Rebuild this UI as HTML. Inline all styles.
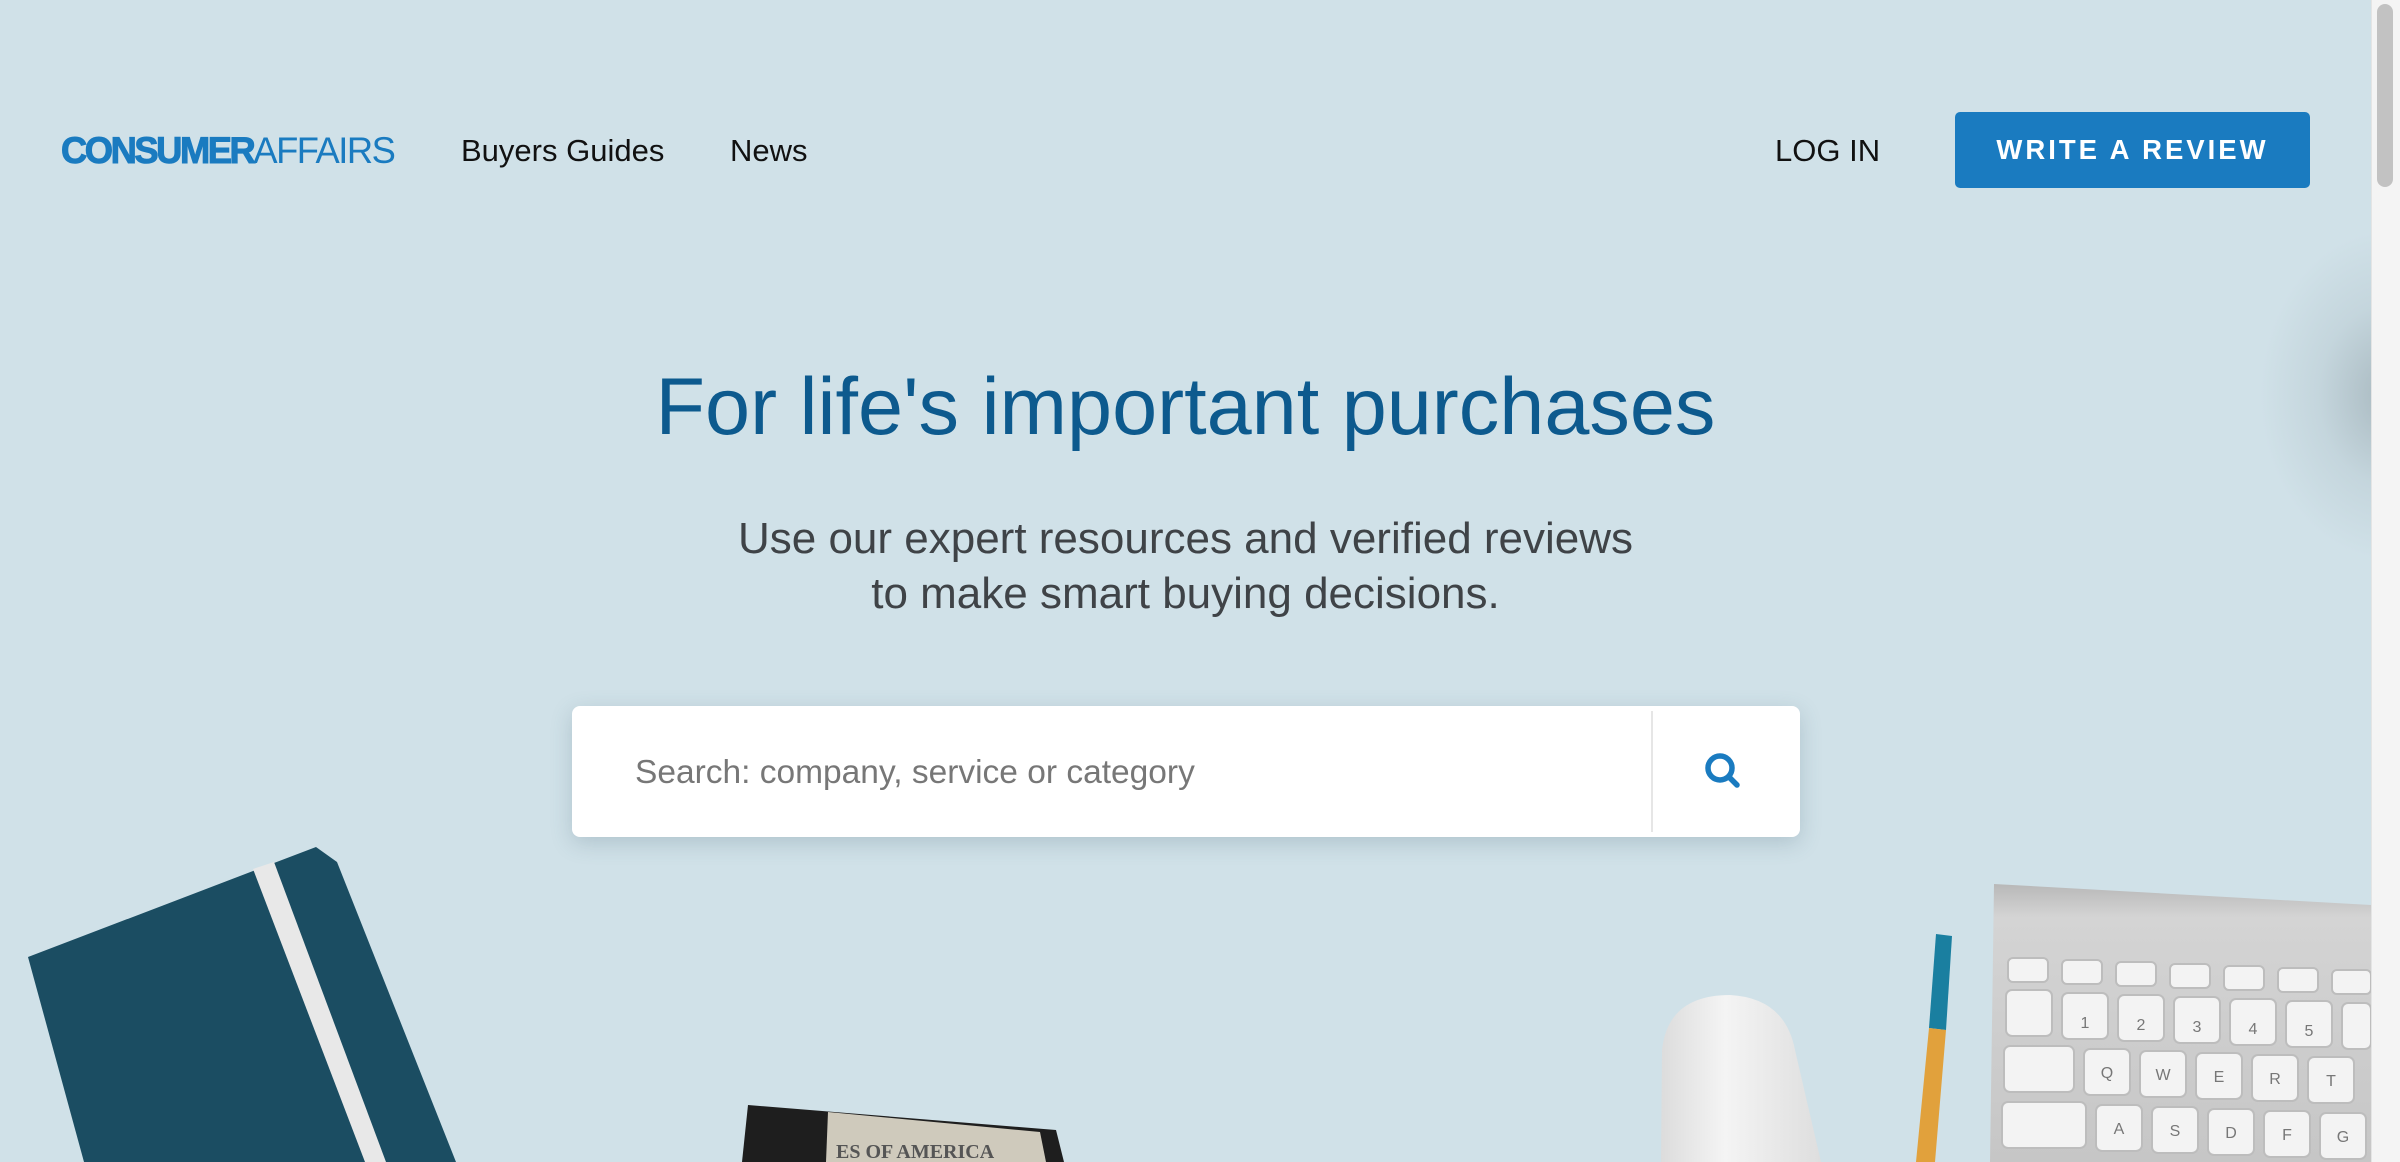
<!DOCTYPE html>
<html><head><meta charset="utf-8"><style>
*{margin:0;padding:0;box-sizing:border-box}
html,body{width:2400px;height:1162px;overflow:hidden}
body{background:#d0e1e8;font-family:"Liberation Sans",Arial,sans-serif;position:relative}
.abs{position:absolute}
.logo{left:61px;top:131px;font-size:37px;color:#1a7bc0;white-space:nowrap;line-height:40px;transform:scaleX(.982);transform-origin:0 0}
.logo b{font-weight:900;letter-spacing:-2.5px;-webkit-text-stroke:1px #1a7bc0}
.logo span{font-weight:300;letter-spacing:-1.5px}
.nav{top:132px;font-size:31px;color:#111;line-height:38px}
.btn{left:1955px;top:112px;width:355px;height:76px;background:#1a7bc0;border-radius:5px;color:#fff;font-weight:bold;font-size:27.5px;letter-spacing:3px;text-align:center;line-height:76px}
h1{position:absolute;left:0;width:2371px;top:362px;text-align:center;font-weight:normal;font-size:81px;color:#0d5a8e;line-height:90px}
.sub{left:0;width:2371px;top:511px;text-align:center;font-size:44px;color:#3f4347;line-height:55px}
.search{left:572px;top:706px;width:1228px;height:131px;background:#fff;border-radius:8px;box-shadow:0 6px 22px rgba(60,90,110,.22)}
.ph{left:63px;top:46px;font-size:33.5px;color:#777}
.div{left:1079px;top:5px;width:2px;height:121px;background:#e6e6e6}
.sb{left:2371px;top:0;width:29px;height:1162px;background:#f4f4f4;border-left:1px solid #e4e4e4}
.thumb{left:2377px;top:4px;width:16px;height:183px;background:#c2c2c2;border-radius:8px}
</style></head><body>
<div class="abs" style="left:2260px;top:230px;width:260px;height:330px;border-radius:50%;background:radial-gradient(closest-side,rgba(120,135,142,.45),rgba(150,168,176,.2) 55%,rgba(208,225,232,0))"></div>

<div class="abs logo"><b>CONSUMER</b><span>AFFAIRS</span></div>
<div class="abs nav" style="left:461px">Buyers Guides</div>
<div class="abs nav" style="left:730px">News</div>
<div class="abs nav" style="left:1775px">LOG IN</div>
<div class="abs btn">WRITE A REVIEW</div>

<h1>For life's important purchases</h1>
<div class="abs sub">Use our expert resources and verified reviews<br>to make smart buying decisions.</div>

<div class="abs search">
<div class="abs ph" style="top:48px">Search: company, service or category</div>
<div class="abs div"></div>
<svg class="abs" style="left:1128px;top:42px" width="46" height="46" viewBox="0 0 46 46"><circle cx="20" cy="20" r="12" fill="none" stroke="#1a7bc0" stroke-width="5.5"/><line x1="29" y1="29" x2="37" y2="37" stroke="#1a7bc0" stroke-width="5.5" stroke-linecap="round"/></svg>
</div>

<svg class="abs" style="left:0;top:0" width="2371" height="1162">
<defs>
<linearGradient id="kb" x1="0" y1="0" x2="0" y2="1"><stop offset="0" stop-color="#b8b8b8"/><stop offset=".12" stop-color="#d4d4d4"/><stop offset="1" stop-color="#c6c6c6"/></linearGradient>
<linearGradient id="ms" x1="0" y1="0" x2="1" y2="0"><stop offset="0" stop-color="#dcdcdc"/><stop offset=".4" stop-color="#f4f4f4"/><stop offset="1" stop-color="#dedede"/></linearGradient>
</defs>
<polygon points="28,957 316,847 337,862 456,1162 84,1162" fill="#1b4d62"/>
<polygon points="253,869 274,862 386,1162 365,1162" fill="#e8e8e8"/>
<polygon points="748,1105 1056,1130 1064,1162 742,1162" fill="#1e1e1e"/>
<polygon points="828,1112 1040,1132 1046,1162 826,1162" fill="#cfcabc"/>
<text x="836" y="1158" font-family="Liberation Serif" font-size="20" fill="#555" font-weight="bold">ES OF AMERICA</text>
<path d="M1661,1162 L1662,1050 Q1668,995 1730,995 Q1785,998 1795,1050 L1821,1162 Z" fill="url(#ms)"/>
<polygon points="1936,934 1952,936 1946,1030 1929,1028" fill="#1a7fa0"/>
<polygon points="1929,1028 1946,1030 1935,1162 1916,1162" fill="#e1a13c"/>
<polygon points="1994,884 2371,905 2371,1162 1990,1162" fill="url(#kb)"/>
<g fill="#f3f3f3" stroke="#bdbdbd" stroke-width="2">
<rect x="2008" y="958" width="40" height="24" rx="5"/><rect x="2062" y="960" width="40" height="24" rx="5"/><rect x="2116" y="962" width="40" height="24" rx="5"/><rect x="2170" y="964" width="40" height="24" rx="5"/><rect x="2224" y="966" width="40" height="24" rx="5"/><rect x="2278" y="968" width="40" height="24" rx="5"/><rect x="2332" y="970" width="39" height="24" rx="5"/>
<rect x="2006" y="990" width="46" height="46" rx="6"/><rect x="2062" y="993" width="46" height="46" rx="6"/><rect x="2118" y="995" width="46" height="46" rx="6"/><rect x="2174" y="997" width="46" height="46" rx="6"/><rect x="2230" y="999" width="46" height="46" rx="6"/><rect x="2286" y="1001" width="46" height="46" rx="6"/><rect x="2342" y="1003" width="29" height="46" rx="6"/>
<rect x="2004" y="1046" width="70" height="46" rx="6"/><rect x="2084" y="1049" width="46" height="46" rx="6"/><rect x="2140" y="1051" width="46" height="46" rx="6"/><rect x="2196" y="1053" width="46" height="46" rx="6"/><rect x="2252" y="1055" width="46" height="46" rx="6"/><rect x="2308" y="1057" width="46" height="46" rx="6"/>
<rect x="2002" y="1102" width="84" height="46" rx="6"/><rect x="2096" y="1105" width="46" height="46" rx="6"/><rect x="2152" y="1107" width="46" height="46" rx="6"/><rect x="2208" y="1109" width="46" height="46" rx="6"/><rect x="2264" y="1111" width="46" height="46" rx="6"/><rect x="2320" y="1113" width="46" height="46" rx="6"/>
</g>
<g font-family="Liberation Sans" font-size="16" fill="#777" text-anchor="middle">
<text x="2107" y="1078">Q</text><text x="2163" y="1080">W</text><text x="2219" y="1082">E</text><text x="2275" y="1084">R</text><text x="2331" y="1086">T</text>
<text x="2119" y="1134">A</text><text x="2175" y="1136">S</text><text x="2231" y="1138">D</text><text x="2287" y="1140">F</text><text x="2343" y="1142">G</text>
<text x="2085" y="1028">1</text><text x="2141" y="1030">2</text><text x="2197" y="1032">3</text><text x="2253" y="1034">4</text><text x="2309" y="1036">5</text>
</g>
</svg>

<div class="abs sb"></div>
<div class="abs thumb"></div>
</body></html>
